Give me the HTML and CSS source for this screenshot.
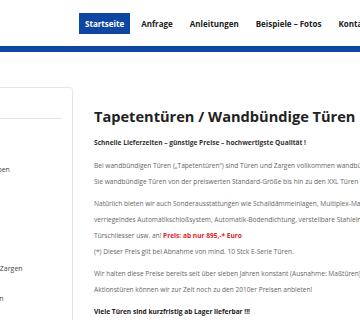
FILE: index.html
```html
<!DOCTYPE html>
<html lang="de">
<head>
<meta charset="utf-8">
<title>Tapetentüren</title>
<link rel="stylesheet" href="styles.css">
</head>
<body>
<div class="page">
  <header class="header">
    <nav class="nav">
      <a class="nav-item active" href="#">Startseite</a>
      <a class="nav-item" href="#">Anfrage</a>
      <a class="nav-item" href="#">Anleitungen</a>
      <a class="nav-item" href="#">Beispiele – Fotos</a>
      <a class="nav-item" href="#">Kontakt</a>
    </nav>
  </header>
  <div class="bar"></div>
  <div class="content">
    <aside class="sidebar">
      <div class="side-head">Produkte</div>
      <ul class="side-list">
        <li>Türen</li>
        <li>Wandbündige Türtypen</li>
        <li>Zargen</li>
        <li>Schlösser</li>
        <li>Tapetentüren sowie Zargen</li>
        <li class="last">Montage-Anleitungen</li>
      </ul>
    </aside>
    <main class="main">
      <h1 class="title">Tapetentüren / Wandbündige Türen</h1>
      <p class="lead">Schnelle Lieferzeiten – günstige Preise – hochwertigste Qualität !</p>
      <p>Bei wandbündigen Türen („Tapetentüren“) sind Türen und Zargen vollkommen wandbündig. Bei uns erhalten<br>Sie wandbündige Türen von der preiswerten Standard-Größe bis hin zu den XXL Türen bis zur Decke.</p>
      <p>Natürlich bieten wir auch Sonderausstattungen wie Schalldämmeinlagen, Multiplex-Massivholzrahmen, selbst-<br>verriegelndes Automatikschloßsystem, Automatik-Bodendichtung, verstellbare Stahleinlagen, integrierte<br>Türschliesser usw. an! <strong class="price">Preis: ab nur 895,-* Euro</strong><br>(*) Dieser Preis gilt bei Abnahme von mind. 10 Stck E-Serie Türen.</p>
      <p>Wir halten diese Preise bereits seit über sieben Jahren konstant (Ausnahme: Maßtüren).<br>Aktionstüren können wir zur Zeit noch zu den 2010er Preisen anbieten!</p>
      <p><strong class="dark">Viele Türen sind kurzfristig ab Lager lieferbar !!!</strong></p>
    </main>
  </div>
</div>
</body>
</html>
```
FILE: styles.css
```css
html, body {
  margin: 0;
  padding: 0;
  background: #fff;
  overflow: hidden;
}
body {
  font-family: "Open Sans", "Noto Sans", sans-serif;
  color: #666;
}
.page {
  width: 900px;
  margin-left: -130px;
}
.header {
  height: 46px;
  display: flex;
  align-items: center;
  padding-left: 209px;
}
.nav {
  display: flex;
  gap: 5px;
}
.nav-item {
  display: block;
  font-size: 8px;
  font-weight: 700;
  color: #222;
  text-decoration: none;
  padding: 0 6px;
  line-height: 21px;
  white-space: nowrap;
}
.nav-item.active {
  background: #0d47a1;
  color: #fff;
}
.bar {
  height: 6px;
  background: #0d47a1;
}
.content {
  display: flex;
  align-items: flex-start;
  padding-top: 35px;
}
.sidebar {
  width: 203px;
  border: 1px solid #e6e6e6;
  border-radius: 3px;
  padding: 0 10px 20px 10px;
  box-sizing: border-box;
  min-height: 300px;
  font-size: 7px;
  color: #444;
}
.side-head {
  height: 30px;
  border-bottom: 1px solid #e6e6e6;
  color: transparent;
}
.side-list {
  list-style: none;
  margin: 0;
  padding: 1px 0 0 52px;
}
.side-list li {
  line-height: 33px;
  white-space: nowrap;
}
.side-list li.last {
  line-height: 27px;
}
.main {
  margin-left: 21px;
  font-size: 6.6px;
  line-height: 16px;
}
.title {
  margin: 19px 0 0 0;
  font-size: 14.6px;
  line-height: 20px;
  font-weight: 700;
  color: #222;
  white-space: nowrap;
}
.main p {
  margin: 0 0 6px 0;
  white-space: nowrap;
}
.main .lead {
  font-weight: 700;
  color: #333;
  margin: 9px 0 7px 0;
}
.price {
  color: #e0232a;
}
.dark {
  color: #222;
}
```
